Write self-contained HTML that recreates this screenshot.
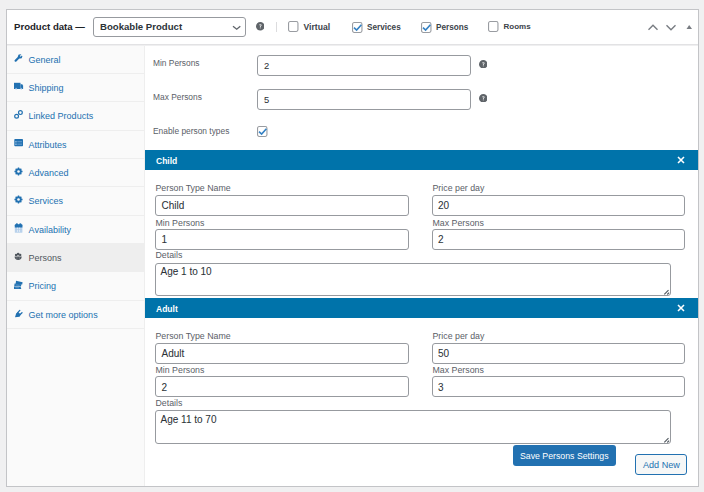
<!DOCTYPE html>
<html><head><meta charset="utf-8"><style>
html,body{margin:0;padding:0;}
body{width:704px;height:492px;background:#f0f0f1;position:relative;overflow:hidden;font-family:"Liberation Sans",sans-serif;}
</style></head><body>
<div style="position:absolute;left:6px;top:9px;width:693px;height:478px;box-sizing:border-box;border:1px solid #c3c4c7;background:#fff;"></div>
<div style="position:absolute;left:7px;top:45px;width:137px;height:441px;background:#fafafa;"></div>
<div style="position:absolute;left:144px;top:45px;width:1px;height:441px;background:#eeeeee;"></div>
<div style="position:absolute;left:7px;top:44px;width:691px;height:1px;background:#e2e2e4;"></div>
<div style="position:absolute;left:7px;top:45px;width:691px;height:1px;background:#efeff0;"></div>
<div style="position:absolute;left:14px;top:21.81px;font-size:9.6px;line-height:10.72px;font-weight:bold;color:#1d2327;white-space:nowrap;">Product data —</div>
<div style="position:absolute;left:93px;top:17px;width:153px;height:20px;box-sizing:border-box;border:1px solid #979a9f;border-radius:3px;background:#fff;"></div>
<div style="position:absolute;left:100px;top:21.91px;font-size:9.6px;line-height:10.72px;font-weight:bold;color:#2c3338;white-space:nowrap;">Bookable Product</div>
<svg style="position:absolute;left:232px;top:23.5px" width="10" height="7" viewBox="0 0 10 7"><path d="M1 2.2 L4.7 5.2 L8.3 2.2" fill="none" stroke="#60656b" stroke-width="1.35"/></svg>
<svg style="position:absolute;left:255.90px;top:22.20px" width="8.6" height="8.6" viewBox="0 0 20 20"><circle cx="10" cy="10" r="10" fill="#5f6469"/><path d="M7.3 7.6 C7.3 5.9 8.5 5 10.1 5 C11.8 5 12.9 6 12.9 7.3 C12.9 8.9 10.9 9.2 10.9 10.9 L10.9 11.6 L9.1 11.6 L9.1 10.7 C9.1 8.6 11 8.4 11 7.4 C11 6.8 10.6 6.5 10 6.5 C9.4 6.5 9 6.9 9 7.6 Z" fill="#fff"/><rect x="9" y="12.7" width="2" height="2" fill="#fff"/></svg>
<div style="position:absolute;left:276px;top:22px;width:1px;height:10px;background:#dcdcde;"></div>
<svg style="position:absolute;left:287.2px;top:20.4px" width="14" height="14" viewBox="0 0 14 14"><rect x="1.55" y="1.55" width="9.4" height="9.9" rx="1.6" fill="#fff" stroke="#999ca1" stroke-width="1.1"/></svg>
<div style="position:absolute;left:303.5px;top:23.12px;font-size:8.6px;line-height:9.61px;font-weight:bold;color:#3c434a;white-space:nowrap;">Virtual</div>
<svg style="position:absolute;left:350.8px;top:20.5px" width="14" height="14" viewBox="0 0 14 14"><rect x="1.55" y="1.55" width="9.4" height="9.9" rx="1.6" fill="#fff" stroke="#999ca1" stroke-width="1.1"/><path d="M3 6.7 L5.6 9.1 L10.4 3.8" fill="none" stroke="#3582c4" stroke-width="1.6"/></svg>
<div style="position:absolute;left:367px;top:22.78px;font-size:8.2px;line-height:9.16px;font-weight:bold;color:#3c434a;white-space:nowrap;">Services</div>
<svg style="position:absolute;left:420px;top:20.5px" width="14" height="14" viewBox="0 0 14 14"><rect x="1.55" y="1.55" width="9.4" height="9.9" rx="1.6" fill="#fff" stroke="#999ca1" stroke-width="1.1"/><path d="M3 6.7 L5.6 9.1 L10.4 3.8" fill="none" stroke="#3582c4" stroke-width="1.6"/></svg>
<div style="position:absolute;left:436px;top:22.78px;font-size:8.2px;line-height:9.16px;font-weight:bold;color:#3c434a;white-space:nowrap;">Persons</div>
<svg style="position:absolute;left:487.2px;top:20.4px" width="14" height="14" viewBox="0 0 14 14"><rect x="1.55" y="1.55" width="9.4" height="9.9" rx="1.6" fill="#fff" stroke="#999ca1" stroke-width="1.1"/></svg>
<div style="position:absolute;left:503.5px;top:22.96px;font-size:8.0px;line-height:8.94px;font-weight:bold;color:#3c434a;white-space:nowrap;">Rooms</div>
<svg style="position:absolute;left:647px;top:23px" width="50" height="9" viewBox="0 0 50 9"><path d="M1.5 6.8 L6 2.3 L10.5 6.8" fill="none" stroke="#787c82" stroke-width="1.4"/><path d="M19.5 2.3 L24 6.8 L28.5 2.3" fill="none" stroke="#787c82" stroke-width="1.4"/><path d="M39.5 6 L42.2 2 L45 6 Z" fill="#787c82"/></svg>
<div style="position:absolute;left:7px;top:73px;width:137px;height:1px;background:#eeeeee;"></div>
<div style="position:absolute;left:28.6px;top:54.76px;font-size:9px;line-height:10.05px;font-weight:normal;color:#2271b1;white-space:nowrap;">General</div>
<svg style="position:absolute;left:13px;top:53px" width="11" height="10" viewBox="0 0 11 10"><path d="M2.6 7.7 L6 4.3" stroke="#2271b1" stroke-width="2.2" stroke-linecap="round"/><circle cx="7.1" cy="3.4" r="2.2" fill="#2271b1"/><path d="M7.2 3.3 L10.2 0.3" stroke="#fafafa" stroke-width="1.2"/></svg>
<div style="position:absolute;left:7px;top:101px;width:137px;height:1px;background:#eeeeee;"></div>
<div style="position:absolute;left:28.6px;top:83.09px;font-size:9px;line-height:10.05px;font-weight:normal;color:#2271b1;white-space:nowrap;">Shipping</div>
<svg style="position:absolute;left:14px;top:82px" width="10" height="9" viewBox="0 0 10 9"><rect x="0" y="0.8" width="6.5" height="6.2" fill="#2271b1"/><path d="M6.5 2.3 L8.3 2.3 L9.1 3.7 L9.1 7 L6.5 7 Z" fill="#2271b1"/><circle cx="2.1" cy="6.6" r="0.9" fill="#8fb9e0"/><circle cx="7.3" cy="6.6" r="0.9" fill="#8fb9e0"/></svg>
<div style="position:absolute;left:7px;top:130px;width:137px;height:1px;background:#eeeeee;"></div>
<div style="position:absolute;left:28.6px;top:111.41px;font-size:9px;line-height:10.05px;font-weight:normal;color:#2271b1;white-space:nowrap;">Linked Products</div>
<svg style="position:absolute;left:13px;top:109px" width="10" height="10" viewBox="0 0 10 10"><circle cx="7.4" cy="3.6" r="1.9" fill="none" stroke="#2271b1" stroke-width="1.2"/><circle cx="3.6" cy="7.2" r="1.9" fill="none" stroke="#2271b1" stroke-width="1.2"/></svg>
<div style="position:absolute;left:7px;top:158px;width:137px;height:1px;background:#eeeeee;"></div>
<div style="position:absolute;left:28.6px;top:139.75px;font-size:9px;line-height:10.05px;font-weight:normal;color:#2271b1;white-space:nowrap;">Attributes</div>
<svg style="position:absolute;left:14px;top:138px" width="10" height="10" viewBox="0 0 10 10"><rect x="0.3" y="1" width="8.7" height="7.3" rx="0.8" fill="#2271b1"/><rect x="1.3" y="3.2" width="1.3" height="1.2" fill="#b8d4ee"/><rect x="1.3" y="5.6" width="1.3" height="1.2" fill="#b8d4ee"/><rect x="3.3" y="3.3" width="4.7" height="0.9" fill="#6fa3d3"/><rect x="3.3" y="5.7" width="4.7" height="0.9" fill="#6fa3d3"/></svg>
<div style="position:absolute;left:7px;top:186px;width:137px;height:1px;background:#eeeeee;"></div>
<div style="position:absolute;left:28.6px;top:168.07px;font-size:9px;line-height:10.05px;font-weight:normal;color:#2271b1;white-space:nowrap;">Advanced</div>
<div style="position:absolute;left:7px;top:215px;width:137px;height:1px;background:#eeeeee;"></div>
<div style="position:absolute;left:28.6px;top:196.40px;font-size:9px;line-height:10.05px;font-weight:normal;color:#2271b1;white-space:nowrap;">Services</div>
<div style="position:absolute;left:7px;top:243px;width:137px;height:1px;background:#eeeeee;"></div>
<div style="position:absolute;left:28.6px;top:224.73px;font-size:9px;line-height:10.05px;font-weight:normal;color:#2271b1;white-space:nowrap;">Availability</div>
<div style="position:absolute;left:7px;top:243px;width:137px;height:28px;background:#eeeeee;"></div>
<div style="position:absolute;left:7px;top:271px;width:137px;height:1px;background:#eeeeee;"></div>
<div style="position:absolute;left:28.6px;top:253.06px;font-size:9px;line-height:10.05px;font-weight:normal;color:#50575e;white-space:nowrap;">Persons</div>
<svg style="position:absolute;left:14px;top:252px" width="9" height="9" viewBox="0 0 9 9"><circle cx="2.1" cy="2.9" r="1.2" fill="#50575e"/><circle cx="4.15" cy="2.2" r="1.35" fill="#50575e"/><circle cx="6.2" cy="2.9" r="1.2" fill="#50575e"/><path d="M0.6 4.5 Q0.6 7.9 4.15 7.9 Q7.7 7.9 7.7 4.5 Z" fill="#50575e"/><path d="M2.9 4.6 L2.9 7.5 M5.4 4.6 L5.4 7.5" stroke="#8a9096" stroke-width="0.5"/></svg>
<div style="position:absolute;left:7px;top:300px;width:137px;height:1px;background:#eeeeee;"></div>
<div style="position:absolute;left:28.6px;top:281.40px;font-size:9px;line-height:10.05px;font-weight:normal;color:#2271b1;white-space:nowrap;">Pricing</div>
<svg style="position:absolute;left:13px;top:280px" width="11" height="10" viewBox="0 0 11 10"><path d="M3 0.8 L9.6 2.3 L9.2 4.6 L2.6 3.9 Z" fill="#2271b1"/><path d="M1.6 3.6 L8.4 4.3 L8.0 6.6 L1.2 6.3 Z" fill="#2271b1"/><path d="M1.0 6.6 L7.6 6.9 L8.3 8.9 L1.0 8.9 Z" fill="#2271b1"/><path d="M2.6 4.9 L6.5 5.3 M2.4 7.6 L6 7.8" stroke="#8fb9e0" stroke-width="0.5"/></svg>
<div style="position:absolute;left:7px;top:328px;width:137px;height:1px;background:#eeeeee;"></div>
<div style="position:absolute;left:28.6px;top:309.73px;font-size:9px;line-height:10.05px;font-weight:normal;color:#2271b1;white-space:nowrap;">Get more options</div>
<svg style="position:absolute;left:14px;top:309px" width="9" height="9" viewBox="0 0 9 9"><path d="M1 8.2 L2.2 4.3 L4.5 3.2 L6.8 5.6 L5.6 7.8 Z" fill="#2271b1"/><path d="M3.5 3.9 L5.8 1.4" stroke="#2271b1" stroke-width="1.3" stroke-linecap="round"/><path d="M5.5 6.1 L8 3.8" stroke="#2271b1" stroke-width="1.3" stroke-linecap="round"/></svg>
<svg style="position:absolute;left:13.9px;top:166.9px" width="9" height="9" viewBox="0 0 9 9"><polygon points="3.73,1.60 3.81,0.46 5.19,0.46 5.27,1.60 6.00,1.90 6.87,1.15 7.85,2.13 7.10,3.00 7.40,3.73 8.54,3.81 8.54,5.19 7.40,5.27 7.10,6.00 7.85,6.87 6.87,7.85 6.00,7.10 5.27,7.40 5.19,8.54 3.81,8.54 3.73,7.40 3.00,7.10 2.13,7.85 1.15,6.87 1.90,6.00 1.60,5.27 0.46,5.19 0.46,3.81 1.60,3.73 1.90,3.00 1.15,2.13 2.13,1.15 3.00,1.90" fill="#2271b1"/><circle cx="4.5" cy="4.5" r="3.05" fill="#2271b1"/><circle cx="4.5" cy="4.5" r="1.3" fill="#fafafa"/></svg>
<svg style="position:absolute;left:13.9px;top:195.4px" width="9" height="9" viewBox="0 0 9 9"><polygon points="3.73,1.60 3.81,0.46 5.19,0.46 5.27,1.60 6.00,1.90 6.87,1.15 7.85,2.13 7.10,3.00 7.40,3.73 8.54,3.81 8.54,5.19 7.40,5.27 7.10,6.00 7.85,6.87 6.87,7.85 6.00,7.10 5.27,7.40 5.19,8.54 3.81,8.54 3.73,7.40 3.00,7.10 2.13,7.85 1.15,6.87 1.90,6.00 1.60,5.27 0.46,5.19 0.46,3.81 1.60,3.73 1.90,3.00 1.15,2.13 2.13,1.15 3.00,1.90" fill="#2271b1"/><circle cx="4.5" cy="4.5" r="3.05" fill="#2271b1"/><circle cx="4.5" cy="4.5" r="1.3" fill="#fafafa"/></svg>
<svg style="position:absolute;left:14px;top:223px" width="9" height="10" viewBox="0 0 9 10"><rect x="0.8" y="1.3" width="7.6" height="8.4" rx="0.5" fill="#b9d2ec"/><path d="M0.8 4.5 L0.8 2.3 Q0.8 1.3 1.8 1.3 L7.4 1.3 Q8.4 1.3 8.4 2.3 L8.4 4.5 Z" fill="#2271b1"/><circle cx="2.9" cy="1.3" r="1.1" fill="#2271b1"/><circle cx="6.3" cy="1.3" r="1.1" fill="#2271b1"/><rect x="3.2" y="4.6" width="0.7" height="4.3" fill="#eef4fa"/><rect x="5.3" y="4.6" width="0.7" height="4.3" fill="#eef4fa"/><rect x="1.4" y="6.3" width="6.4" height="0.6" fill="#a9c8e6"/></svg>
<div style="position:absolute;left:153px;top:59.40px;font-size:8.4px;line-height:9.38px;font-weight:normal;color:#5a6067;white-space:nowrap;">Min Persons</div>
<div style="position:absolute;left:257px;top:55px;width:214px;height:21px;box-sizing:border-box;border:1px solid #979a9f;border-radius:3px;background:#fff;"></div>
<div style="position:absolute;left:264px;top:60.99px;font-size:9.4px;line-height:10.50px;font-weight:normal;color:#2c3338;white-space:nowrap;-webkit-text-stroke:0.06px #2c3338;">2</div>
<svg style="position:absolute;left:478.50px;top:59.70px" width="8.6" height="8.6" viewBox="0 0 20 20"><circle cx="10" cy="10" r="10" fill="#5f6469"/><path d="M7.3 7.6 C7.3 5.9 8.5 5 10.1 5 C11.8 5 12.9 6 12.9 7.3 C12.9 8.9 10.9 9.2 10.9 10.9 L10.9 11.6 L9.1 11.6 L9.1 10.7 C9.1 8.6 11 8.4 11 7.4 C11 6.8 10.6 6.5 10 6.5 C9.4 6.5 9 6.9 9 7.6 Z" fill="#fff"/><rect x="9" y="12.7" width="2" height="2" fill="#fff"/></svg>
<div style="position:absolute;left:153px;top:93.40px;font-size:8.4px;line-height:9.38px;font-weight:normal;color:#5a6067;white-space:nowrap;">Max Persons</div>
<div style="position:absolute;left:257px;top:89px;width:214px;height:21px;box-sizing:border-box;border:1px solid #979a9f;border-radius:3px;background:#fff;"></div>
<div style="position:absolute;left:264px;top:94.99px;font-size:9.4px;line-height:10.50px;font-weight:normal;color:#2c3338;white-space:nowrap;-webkit-text-stroke:0.06px #2c3338;">5</div>
<svg style="position:absolute;left:478.50px;top:93.70px" width="8.6" height="8.6" viewBox="0 0 20 20"><circle cx="10" cy="10" r="10" fill="#5f6469"/><path d="M7.3 7.6 C7.3 5.9 8.5 5 10.1 5 C11.8 5 12.9 6 12.9 7.3 C12.9 8.9 10.9 9.2 10.9 10.9 L10.9 11.6 L9.1 11.6 L9.1 10.7 C9.1 8.6 11 8.4 11 7.4 C11 6.8 10.6 6.5 10 6.5 C9.4 6.5 9 6.9 9 7.6 Z" fill="#fff"/><rect x="9" y="12.7" width="2" height="2" fill="#fff"/></svg>
<div style="position:absolute;left:153px;top:127.20px;font-size:8.4px;line-height:9.38px;font-weight:normal;color:#5a6067;white-space:nowrap;">Enable person types</div>
<svg style="position:absolute;left:256.4px;top:125.4px" width="14" height="14" viewBox="0 0 14 14"><rect x="1.55" y="1.55" width="9.4" height="9.9" rx="1.6" fill="#fff" stroke="#999ca1" stroke-width="1.1"/><path d="M3 6.7 L5.6 9.1 L10.4 3.8" fill="none" stroke="#3582c4" stroke-width="1.6"/></svg>
<div style="position:absolute;left:145px;top:150px;width:553px;height:20px;background:#0073aa;"></div>
<div style="position:absolute;left:156px;top:156.81px;font-size:8.5px;line-height:9.49px;font-weight:bold;color:#fff;white-space:nowrap;">Child</div>
<svg style="position:absolute;left:676.6px;top:155.8px" width="8" height="8" viewBox="0 0 8 8"><path d="M1 1 L7 7 M7 1 L1 7" stroke="#fff" stroke-width="1.55"/></svg>
<div style="position:absolute;left:155.5px;top:184.44px;font-size:8.8px;line-height:9.83px;font-weight:normal;color:#5a6067;white-space:nowrap;">Person Type Name</div>
<div style="position:absolute;left:432.5px;top:184.44px;font-size:8.8px;line-height:9.83px;font-weight:normal;color:#5a6067;white-space:nowrap;">Price per day</div>
<div style="position:absolute;left:155px;top:195px;width:254px;height:21px;box-sizing:border-box;border:1px solid #979a9f;border-radius:3px;background:#fff;"></div>
<div style="position:absolute;left:432px;top:195px;width:253px;height:21px;box-sizing:border-box;border:1px solid #979a9f;border-radius:3px;background:#fff;"></div>
<div style="position:absolute;left:161.5px;top:200.45px;font-size:10px;line-height:11.17px;font-weight:normal;color:#2c3338;white-space:nowrap;-webkit-text-stroke:0.06px #2c3338;">Child</div>
<div style="position:absolute;left:438px;top:200.45px;font-size:10px;line-height:11.17px;font-weight:normal;color:#2c3338;white-space:nowrap;-webkit-text-stroke:0.06px #2c3338;">20</div>
<div style="position:absolute;left:155.5px;top:218.54px;font-size:8.8px;line-height:9.83px;font-weight:normal;color:#5a6067;white-space:nowrap;">Min Persons</div>
<div style="position:absolute;left:432.5px;top:218.54px;font-size:8.8px;line-height:9.83px;font-weight:normal;color:#5a6067;white-space:nowrap;">Max Persons</div>
<div style="position:absolute;left:155px;top:229px;width:254px;height:21px;box-sizing:border-box;border:1px solid #979a9f;border-radius:3px;background:#fff;"></div>
<div style="position:absolute;left:432px;top:229px;width:253px;height:21px;box-sizing:border-box;border:1px solid #979a9f;border-radius:3px;background:#fff;"></div>
<div style="position:absolute;left:161.5px;top:233.95px;font-size:10px;line-height:11.17px;font-weight:normal;color:#2c3338;white-space:nowrap;-webkit-text-stroke:0.06px #2c3338;">1</div>
<div style="position:absolute;left:438px;top:233.95px;font-size:10px;line-height:11.17px;font-weight:normal;color:#2c3338;white-space:nowrap;-webkit-text-stroke:0.06px #2c3338;">2</div>
<div style="position:absolute;left:155.5px;top:251.34px;font-size:8.8px;line-height:9.83px;font-weight:normal;color:#5a6067;white-space:nowrap;">Details</div>
<div style="position:absolute;left:155px;top:263px;width:516px;height:33px;box-sizing:border-box;border:1px solid #979a9f;border-radius:3px;background:#fff;"></div>
<div style="position:absolute;left:160.5px;top:266.05px;font-size:10px;line-height:11.17px;font-weight:normal;color:#2c3338;white-space:nowrap;-webkit-text-stroke:0.06px #2c3338;">Age 1 to 10</div>
<svg style="position:absolute;left:663px;top:288px" width="8" height="8" viewBox="0 0 8 8"><path d="M1.3 6.3 L5.5 2.1 M4.3 6.5 L6.1 4.7" stroke="#50575e" stroke-width="1.1"/></svg>
<div style="position:absolute;left:145px;top:298px;width:553px;height:20px;background:#0073aa;"></div>
<div style="position:absolute;left:156px;top:305.21px;font-size:8.5px;line-height:9.49px;font-weight:bold;color:#fff;white-space:nowrap;">Adult</div>
<svg style="position:absolute;left:676.6px;top:304.2px" width="8" height="8" viewBox="0 0 8 8"><path d="M1 1 L7 7 M7 1 L1 7" stroke="#fff" stroke-width="1.55"/></svg>
<div style="position:absolute;left:155.5px;top:331.74px;font-size:8.8px;line-height:9.83px;font-weight:normal;color:#5a6067;white-space:nowrap;">Person Type Name</div>
<div style="position:absolute;left:432.5px;top:331.74px;font-size:8.8px;line-height:9.83px;font-weight:normal;color:#5a6067;white-space:nowrap;">Price per day</div>
<div style="position:absolute;left:155px;top:343px;width:254px;height:21px;box-sizing:border-box;border:1px solid #979a9f;border-radius:3px;background:#fff;"></div>
<div style="position:absolute;left:432px;top:343px;width:253px;height:21px;box-sizing:border-box;border:1px solid #979a9f;border-radius:3px;background:#fff;"></div>
<div style="position:absolute;left:161.5px;top:348.45px;font-size:10px;line-height:11.17px;font-weight:normal;color:#2c3338;white-space:nowrap;-webkit-text-stroke:0.06px #2c3338;">Adult</div>
<div style="position:absolute;left:438px;top:348.45px;font-size:10px;line-height:11.17px;font-weight:normal;color:#2c3338;white-space:nowrap;-webkit-text-stroke:0.06px #2c3338;">50</div>
<div style="position:absolute;left:155.5px;top:365.84px;font-size:8.8px;line-height:9.83px;font-weight:normal;color:#5a6067;white-space:nowrap;">Min Persons</div>
<div style="position:absolute;left:432.5px;top:365.84px;font-size:8.8px;line-height:9.83px;font-weight:normal;color:#5a6067;white-space:nowrap;">Max Persons</div>
<div style="position:absolute;left:155px;top:376px;width:254px;height:21px;box-sizing:border-box;border:1px solid #979a9f;border-radius:3px;background:#fff;"></div>
<div style="position:absolute;left:432px;top:376px;width:253px;height:21px;box-sizing:border-box;border:1px solid #979a9f;border-radius:3px;background:#fff;"></div>
<div style="position:absolute;left:161.5px;top:381.95px;font-size:10px;line-height:11.17px;font-weight:normal;color:#2c3338;white-space:nowrap;-webkit-text-stroke:0.06px #2c3338;">2</div>
<div style="position:absolute;left:438px;top:381.95px;font-size:10px;line-height:11.17px;font-weight:normal;color:#2c3338;white-space:nowrap;-webkit-text-stroke:0.06px #2c3338;">3</div>
<div style="position:absolute;left:155.5px;top:398.64px;font-size:8.8px;line-height:9.83px;font-weight:normal;color:#5a6067;white-space:nowrap;">Details</div>
<div style="position:absolute;left:155px;top:410px;width:516px;height:34px;box-sizing:border-box;border:1px solid #979a9f;border-radius:3px;background:#fff;"></div>
<div style="position:absolute;left:160.5px;top:414.05px;font-size:10px;line-height:11.17px;font-weight:normal;color:#2c3338;white-space:nowrap;-webkit-text-stroke:0.06px #2c3338;">Age 11 to 70</div>
<svg style="position:absolute;left:663px;top:436px" width="8" height="8" viewBox="0 0 8 8"><path d="M1.3 6.3 L5.5 2.1 M4.3 6.5 L6.1 4.7" stroke="#50575e" stroke-width="1.1"/></svg>
<div style="position:absolute;left:513px;top:445px;width:103px;height:21.3px;background:#2271b1;border-radius:3px;"></div>
<div style="position:absolute;left:520px;top:451.57px;font-size:8.76px;line-height:9.78px;font-weight:normal;color:#fff;white-space:nowrap;">Save Persons Settings</div>
<div style="position:absolute;left:635px;top:454px;width:52px;height:21px;box-sizing:border-box;border:1px solid #2271b1;border-radius:3px;background:#f6f7f7;"></div>
<div style="position:absolute;left:643px;top:459.76px;font-size:9.1px;line-height:10.16px;font-weight:normal;color:#2271b1;white-space:nowrap;">Add New</div>
</body></html>
